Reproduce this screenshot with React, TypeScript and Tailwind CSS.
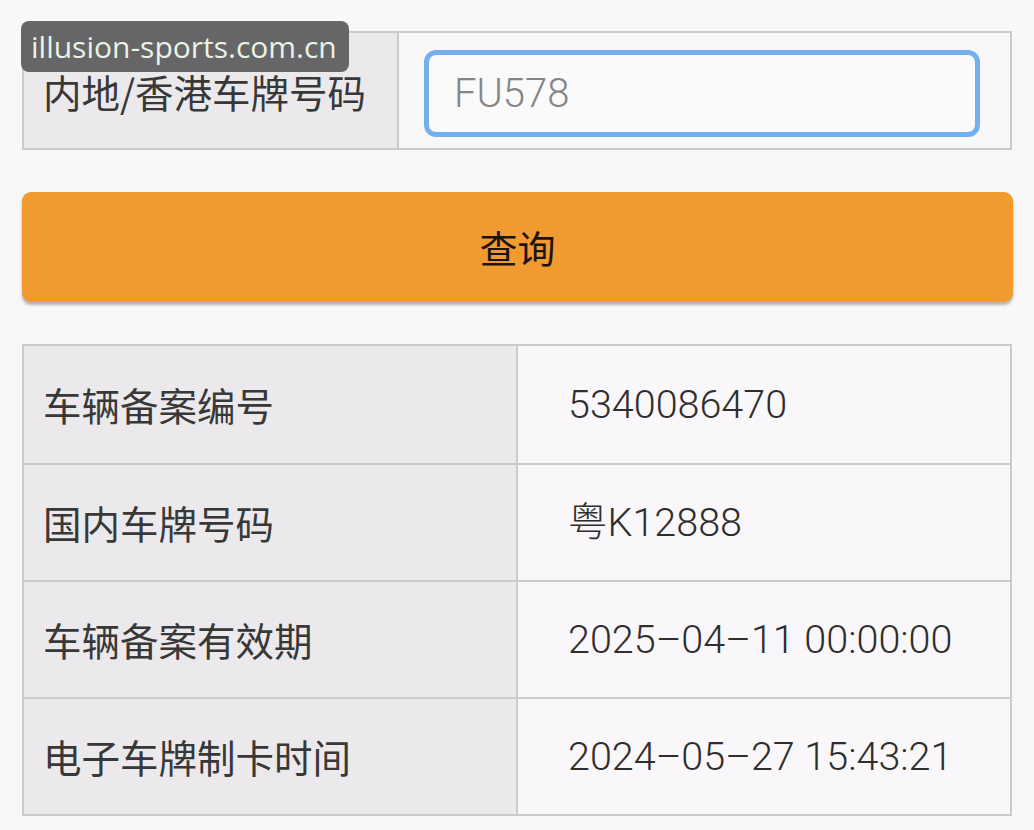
import { useState } from 'react';

const CJK = "font-['Noto_Sans_CJK_SC',sans-serif]";
const NUM = "font-['Roboto','Noto_Sans_CJK_SC',sans-serif]";

// dates are shown with long dashes, as on the record card
const RECORD: { label: string; value: string }[] = [
  { label: '车辆备案编号', value: '5340086470' },
  { label: '国内车牌号码', value: '粤K12888' },
  { label: '车辆备案有效期', value: '2025–04–11 00:00:00' },
  { label: '电子车牌制卡时间', value: '2024–05–27 15:43:21' },
];

export default function App() {
  const [plate, setPlate] = useState('');

  return (
    <div className="relative min-h-[830px] w-[1034px] bg-[#f9f7f9] px-[22px] pt-[31px]">
      {/* site tag */}
      <div className="absolute left-[21px] top-[21px] z-10 h-[51px] w-[328px] rounded-[8px] bg-[#5f5e60]/95 pl-[10px] pt-[11px] font-['Open_Sans',sans-serif] text-[30px] leading-none text-[#e8f3e6]">
        illusion-sports.com.cn
      </div>

      {/* plate input row */}
      <div className="flex h-[119px] w-[990px] border-2 border-[#cbcbcb]">
        <div className="flex w-[375px] items-center border-r-2 border-[#cbcbcb] bg-[#ebe9eb] pl-[19px]">
          <span className={`pt-[2px] ${CJK} text-[38.5px] leading-none text-[#383838]`}>内地/香港车牌号码</span>
        </div>
        <div className="flex-1 bg-[#f9f8f9] pl-[25px] pr-[30px] pt-[17px]">
          <input
            value={plate}
            onChange={(e) => setPlate(e.target.value)}
            placeholder="FU578"
            className={`h-[87px] w-full rounded-[12px] border-[5px] border-[#74aff0] bg-[#fafafa] pl-[25px] ${NUM} text-[40px] font-light text-[#333] outline-none placeholder:text-[#858585]`}
          />
        </div>
      </div>

      {/* query button */}
      <button
        className={`mt-[42px] flex h-[110px] w-[991px] items-center justify-center rounded-[9px] bg-[#f09a30] pb-[2px] shadow-[0_3px_3px_rgba(0,0,0,0.28)] ${CJK} text-[38px] text-[#1b1410]`}
      >
        查询
      </button>

      {/* result table */}
      <div className="mt-[42px] w-[990px] border-2 border-[#cbcbcb]">
        {RECORD.map((row, i) => (
          <div
            key={row.label}
            className={`flex h-[117px] ${i > 0 ? 'border-t-2 border-[#cbcbcb]' : ''}`}
          >
            <div className={`flex w-[494px] items-center border-r-2 border-[#cbcbcb] bg-[#ebe9eb] pl-[19px] ${CJK} text-[38.5px] text-[#383838]`}>
              {row.label}
            </div>
            <div className={`flex flex-1 items-center bg-[#f9f7f9] pl-[50px] ${NUM} text-[39.5px] font-light text-[#2e2e2e]`}>
              {row.value}
            </div>
          </div>
        ))}
      </div>
    </div>
  );
}
